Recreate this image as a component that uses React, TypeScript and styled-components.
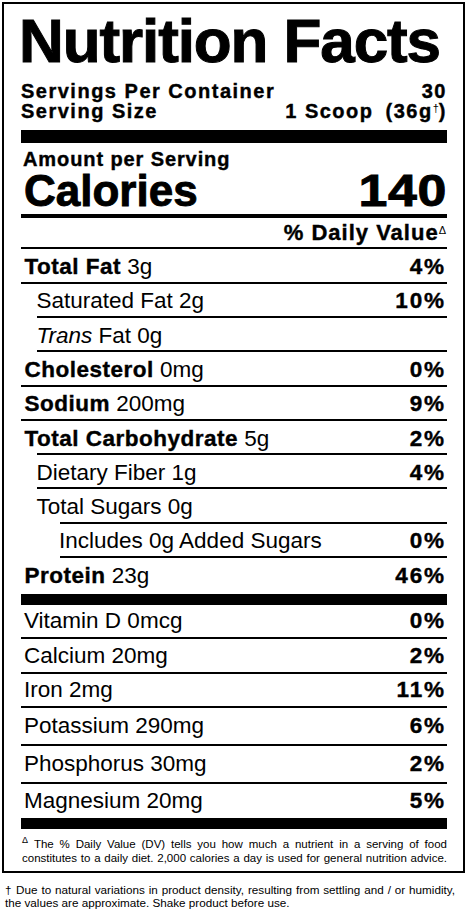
import { ReactNode } from "react";
import styled, { createGlobalStyle } from "styled-components";

const GlobalStyle = createGlobalStyle`
  html, body {
    margin: 0;
    padding: 0;
    background: #fff;
  }
  body {
    font-family: "Liberation Sans", Arial, sans-serif;
    color: #000;
  }
`;

const Page = styled.div`
  width: 469px;
  box-sizing: border-box;
  padding: 2px 4px 0 2px;
`;

const Label = styled.section`
  width: 463px;
  box-sizing: border-box;
  border: 2px solid #000;
  padding: 6px 16px 5.4px 17px;
`;

const Title = styled.h1`
  margin: 0 0 0 -2px;
  font-size: 62px;
  line-height: 62px;
  font-weight: 700;
  letter-spacing: -1.1px;
  white-space: nowrap;
  -webkit-text-stroke: 1px #000;
`;

const Serving = styled.div`
  margin-top: 8.5px;
  font-size: 20px;
  line-height: 20.5px;
  font-weight: 700;
  letter-spacing: 1.5px;
  -webkit-text-stroke: 0.4px #000;
`;

const Line = styled.div`
  display: flex;
  justify-content: space-between;
`;

const Paren = styled.span`
  margin-left: 5px;
`;

const Sup = styled.sup<{ $size: number }>`
  font-size: ${(p) => p.$size}px;
  font-weight: 400;
  letter-spacing: 0;
  line-height: 0;
  vertical-align: ${(p) => p.$size * 0.55}px;
  -webkit-text-stroke: 0;
`;

const Bar = styled.div<{ $h: number; $mt?: number }>`
  height: ${(p) => p.$h}px;
  margin-top: ${(p) => p.$mt ?? 0}px;
  background: #000;
`;

const Amount = styled.div`
  padding: 5.1px 0 0 2px;
  font-size: 20px;
  line-height: 22px;
  font-weight: 700;
  letter-spacing: 0.9px;
  -webkit-text-stroke: 0.4px #000;
`;

const CalRow = styled.div`
  display: flex;
  justify-content: space-between;
  padding: 0 0 2px 3px;
  font-size: 44px;
  line-height: 42px;
  font-weight: 700;
  border-bottom: 4px solid #000;
  -webkit-text-stroke: 0.9px #000;
`;

const CalValue = styled.span`
  display: inline-block;
  letter-spacing: 0.5px;
  transform: scaleX(1.18);
  transform-origin: right center;
`;

const DvRow = styled.div`
  text-align: right;
  padding: 4px 1px 3.9px 0;
  font-size: 22px;
  line-height: 22px;
  font-weight: 700;
  letter-spacing: 1px;
  border-bottom: 2px solid #000;
  -webkit-text-stroke: 0.4px #000;
`;

const indents = [3.5, 15.5, 38];

const Row = styled.div<{ $level: number; $line: number }>`
  display: flex;
  justify-content: space-between;
  align-items: baseline;
  padding: 5.7px 3px 4.58px ${(p) => indents[p.$level]}px;
  font-size: 22.5px;
  line-height: 24px;
  background: linear-gradient(#000, #000) right bottom /
    calc(100% - ${(p) => p.$line}px) 2px no-repeat;
`;

const LastRow = styled(Row)`
  padding-bottom: 6.6px;
  background: none;
`;

const VitRow = styled.div<{ $h: number; $last?: boolean }>`
  display: flex;
  justify-content: space-between;
  align-items: center;
  box-sizing: border-box;
  height: ${(p) => p.$h}px;
  padding: 0 3px 0 3px;
  font-size: 22.5px;
  line-height: 24px;
  border-bottom: ${(p) => (p.$last ? "none" : "2px solid #000")};
`;

const Name = styled.b`
  font-weight: 700;
  letter-spacing: 0.5px;
  -webkit-text-stroke: 0.4px #000;
`;

const Pct = styled.b`
  font-weight: 700;
  letter-spacing: 1.8px;
  margin-right: -1.8px;
  -webkit-text-stroke: 0.4px #000;
`;

const Note = styled.p`
  margin: 0;
  padding: 8px 0 0 1px;
  font-size: 11.5px;
  line-height: 14.3px;
  text-align: justify;
  text-align-last: justify;
`;

const Outer = styled.div`
  margin-top: 9.7px;
  padding-left: 3px;
  font-size: 11.7px;
  line-height: 13px;
`;

const OuterLine = styled.div<{ $justify?: boolean }>`
  width: 450px;
  text-align: ${(p) => (p.$justify ? "justify" : "left")};
  text-align-last: ${(p) => (p.$justify ? "justify" : "left")};
`;

interface INutrient {
  name: ReactNode;
  amt?: string;
  pct?: string;
  level: number;
  line: number;
}

const nutrients: INutrient[] = [
  { name: <Name>Total Fat</Name>, amt: "3g", pct: "4%", level: 0, line: 0 },
  { name: "Saturated Fat", amt: "2g", pct: "10%", level: 1, line: 16 },
  { name: <><i>Trans</i> Fat</>, amt: "0g", level: 1, line: 16 },
  { name: <Name>Cholesterol</Name>, amt: "0mg", pct: "0%", level: 0, line: 0 },
  { name: <Name>Sodium</Name>, amt: "200mg", pct: "9%", level: 0, line: 0 },
  { name: <Name>Total Carbohydrate</Name>, amt: "5g", pct: "2%", level: 0, line: 16 },
  { name: "Dietary Fiber", amt: "1g", pct: "4%", level: 1, line: 16 },
  { name: "Total Sugars", amt: "0g", level: 1, line: 39 },
  { name: "Includes 0g Added Sugars", pct: "0%", level: 2, line: 39 },
];

const vitamins = [
  { name: "Vitamin D 0mcg", pct: "0%", h: 34.2 },
  { name: "Calcium 20mg", pct: "2%", h: 35 },
  { name: "Iron 2mg", pct: "11%", h: 33.3 },
  { name: "Potassium 290mg", pct: "6%", h: 38.3 },
  { name: "Phosphorus 30mg", pct: "2%", h: 38.4 },
  { name: "Magnesium 20mg", pct: "5%", h: 33.8 },
];

function App() {
  return (
    <Page>
      <GlobalStyle />
      <Label>
        <Title>Nutrition Facts</Title>
        <Serving>
          <Line>
            <span>Servings Per Container</span>
            <span>30</span>
          </Line>
          <Line>
            <span>Serving Size</span>
            <span>
              1 Scoop <Paren>(36g<Sup $size={11}>†</Sup>)</Paren>
            </span>
          </Line>
        </Serving>
        <Bar $h={13} $mt={8} />
        <Amount>Amount per Serving</Amount>
        <CalRow>
          <span>Calories</span>
          <CalValue>140</CalValue>
        </CalRow>
        <DvRow>
          % Daily Value<Sup $size={11}>Δ</Sup>
        </DvRow>
        {nutrients.map((n, i) => (
          <Row key={i} $level={n.level} $line={n.line}>
            <span>
              {n.name}
              {n.amt && ` ${n.amt}`}
            </span>
            {n.pct && <Pct>{n.pct}</Pct>}
          </Row>
        ))}
        <LastRow $level={0} $line={0}>
          <span>
            <Name>Protein</Name> 23g
          </span>
          <Pct>46%</Pct>
        </LastRow>
        <Bar $h={11} />
        {vitamins.map((v, i) => (
          <VitRow key={v.name} $h={v.h} $last={i === vitamins.length - 1}>
            <span>{v.name}</span>
            <Pct>{v.pct}</Pct>
          </VitRow>
        ))}
        <Bar $h={11} />
        <Note>
          <Sup $size={9}>Δ</Sup> The % Daily Value (DV) tells you how much a nutrient in a serving of food
          <br />
          constitutes to a daily diet. 2,000 calories a day is used for general nutrition advice.
        </Note>
      </Label>
      <Outer>
        <OuterLine $justify>
          † Due to natural variations in product density, resulting from settling and / or humidity,
        </OuterLine>
        <OuterLine>the values are approximate. Shake product before use.</OuterLine>
      </Outer>
    </Page>
  );
}

export default App;
